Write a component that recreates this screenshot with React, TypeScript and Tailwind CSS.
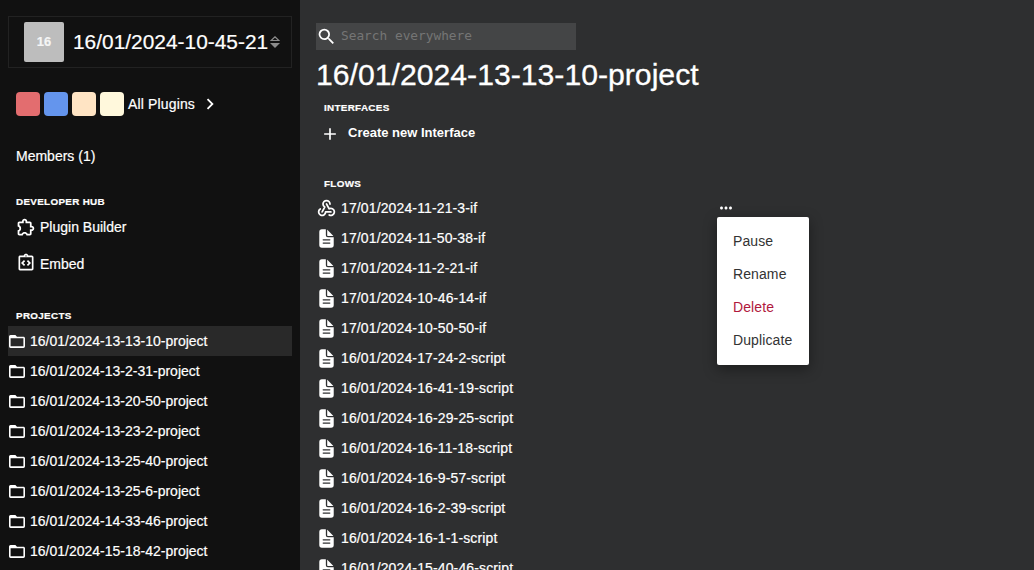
import type { ReactNode } from "react";
import { MdSearch, MdOutlineIntegrationInstructions, MdChevronRight, MdMoreHoriz, MdAdd } from "react-icons/md";
import { TbWebhook } from "react-icons/tb";
import { BiExtension } from "react-icons/bi";
import { IoDocumentText } from "react-icons/io5";

const projects = ["13-13-10", "13-2-31", "13-20-50", "13-23-2", "13-25-40", "13-25-6", "14-33-46", "15-18-42"];

const flows = [
  "17/01/2024-11-21-3-if",
  "17/01/2024-11-50-38-if",
  "17/01/2024-11-2-21-if",
  "17/01/2024-10-46-14-if",
  "17/01/2024-10-50-50-if",
  "16/01/2024-17-24-2-script",
  "16/01/2024-16-41-19-script",
  "16/01/2024-16-29-25-script",
  "16/01/2024-16-11-18-script",
  "16/01/2024-16-9-57-script",
  "16/01/2024-16-2-39-script",
  "16/01/2024-16-1-1-script",
  "16/01/2024-15-40-46-script",
];

function Heading({ children }: { children: ReactNode }) {
  return <h2 className="h-4 pt-px text-[9.9px] leading-4 font-bold tracking-[0.3px] uppercase [-webkit-text-stroke:0.2px]">{children}</h2>;
}

function FolderIcon() {
  return (
    <svg viewBox="2 4 20 16" fill="currentColor" className="ml-px h-[13px] w-4">
      <path d="M20,18H4V8H20M20,6H12L10,4H4C2.89,4 2,4.89 2,6V18A2,2 0 0,0 4,20H20A2,2 0 0,0 22,18V8C22,6.89 21.1,6 20,6Z" />
    </svg>
  );
}

function Sidebar() {
  return (
    <aside className="flex w-[300px] shrink-0 flex-col bg-[#111111] px-2 pt-4 [-webkit-text-stroke:0.2px]">
      <button className="flex h-[52px] shrink-0 items-center border border-[#222222] pl-[15px]">
        <span className="flex size-10 items-center justify-center rounded-xs bg-[#bdbdbd] text-[13px] font-bold text-[#f5f5f5]">16</span>
        <span className="ml-[9px] w-[195px] text-left text-[20.9px] whitespace-nowrap">16/01/2024-10-45-21</span>
        <svg width="10" height="12" viewBox="0 0 10 12" className="ml-0.5 text-[#8c8c8c]">
          <path d="M1.2 4.5 5 .8l3.8 3.7Z" fill="none" stroke="currentColor" strokeWidth="1.2" />
          <path d="M0 7h10L5 12Z" fill="currentColor" />
        </svg>
      </button>
      <div className="mt-6 flex h-6 shrink-0 items-center gap-1 pl-2">
        <span className="size-6 rounded bg-[#e36d6f]" />
        <span className="size-6 rounded bg-[#6495ed]" />
        <span className="size-6 rounded bg-[#ffe4c4]" />
        <span className="size-6 rounded bg-[#fff8dc]" />
        <span className="tracking-[0.15px]">All Plugins</span>
        <MdChevronRight size={22} />
      </div>
      <div className="mt-[30px] h-5 shrink-0 pl-2 leading-5">Members (1)</div>
      <div className="mt-[27px] pl-2">
        <Heading>Developer hub</Heading>
      </div>
      <div className="mt-2 flex h-5 shrink-0 items-center gap-1 pl-[7px]">
        <BiExtension size={21} />
        <span>Plugin Builder</span>
      </div>
      <div className="mt-[17px] flex h-5 shrink-0 items-center gap-1 pl-2">
        <MdOutlineIntegrationInstructions size={20} className="-mt-0.5" />
        <span>Embed</span>
      </div>
      <div className="mt-[33px] pl-2">
        <Heading>Projects</Heading>
      </div>
      <ul className="mt-[3px]">
        {projects.map((name, i) => (
          <li key={name} className={i === 0 ? "flex h-[30px] items-center bg-[#292929]" : "flex h-[30px] items-center"}>
            <FolderIcon />
            <span className="ml-[5px]">16/01/2024-{name}-project</span>
          </li>
        ))}
      </ul>
    </aside>
  );
}

function FlowMenu() {
  return (
    <div className="absolute top-6 left-0 w-[92px] rounded-xs bg-white py-2 tracking-[0.1px] text-[#333333] shadow-[0_4px_14px_rgba(0,0,0,0.4)]">
      {["Pause", "Rename", "Delete", "Duplicate"].map((item) => (
        <div key={item} className={item === "Delete" ? "h-[33px] pl-4 leading-[33px] text-[#b0183d]" : "h-[33px] pl-4 leading-[33px]"}>
          {item}
        </div>
      ))}
    </div>
  );
}

export default function App() {
  return (
    <div className="flex h-[570px] w-[1034px] overflow-hidden bg-[#2e2f30] font-['Liberation_Sans',sans-serif] text-sm text-white">
      <Sidebar />
      <main className="flex-1 pt-[23px] pl-4">
        <label className="flex h-[27px] w-[260px] items-center bg-[#444546]">
          <MdSearch size={21} className="-mt-px" />
          <input
            placeholder="Search everywhere"
            className="ml-1 w-[220px] font-['DejaVu_Sans_Mono',monospace] text-[12.8px] outline-none placeholder:text-[#757575]"
          />
        </label>
        <h1 className="mt-[7px] h-9 text-[30.2px] leading-9 whitespace-nowrap [-webkit-text-stroke:0.3px]">16/01/2024-13-13-10-project</h1>
        <div className="mt-1.5 pl-2">
          <Heading>Interfaces</Heading>
        </div>
        <div className="mt-2 flex h-5 items-center pl-1 text-[13px] font-bold">
          <MdAdd size={20} className="mt-0.5" />
          <span className="ml-2">Create new Interface</span>
        </div>
        <div className="mt-8 pl-2">
          <Heading>Flows</Heading>
        </div>
        <ul className="mt-0.5">
          {flows.map((name, i) => (
            <li key={name} className="flex h-[30px] items-center">
              {i === 0 ? <TbWebhook size={21} className="-mt-px" /> : <IoDocumentText size={21} className="mt-px" />}
              <span className="ml-1 w-[376px] tracking-[0.13px] [-webkit-text-stroke:0.2px]">{name}</span>
              {i === 0 && (
                <div className="relative h-[30px]">
                  <MdMoreHoriz size={18} className="mt-1.5" />
                  <FlowMenu />
                </div>
              )}
            </li>
          ))}
        </ul>
      </main>
    </div>
  );
}
